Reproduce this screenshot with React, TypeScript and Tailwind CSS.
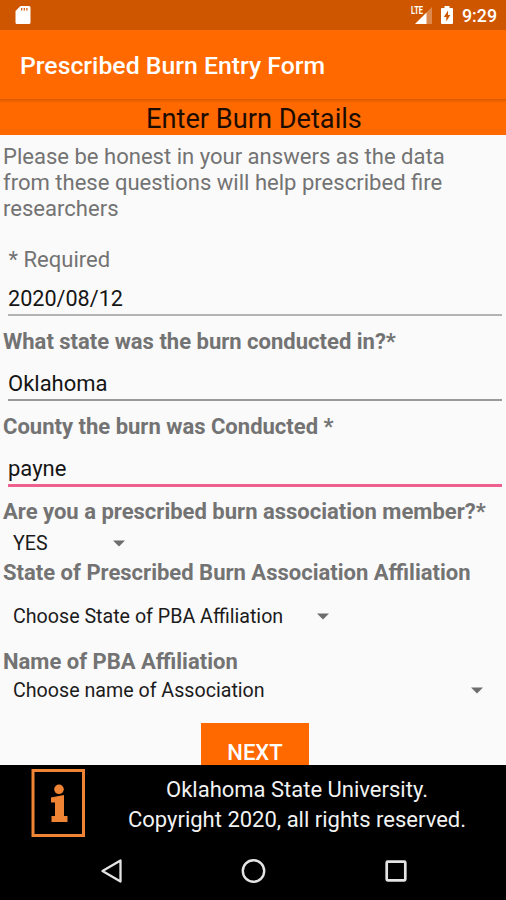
import type { ReactNode } from "react";

function StatusBar() {
  return (
    <div className="flex h-[30px] shrink-0 items-center bg-[#cf5600] pl-[15px] pr-[9px] text-white">
      <svg width="16" height="20" viewBox="0 0 16 20" aria-hidden="true">
        <path
          d="M5.5 1H14a1.5 1.5 0 0 1 1.5 1.5v15A1.5 1.5 0 0 1 14 19H2a1.5 1.5 0 0 1-1.500-1.500V6z"
          fill="currentColor"
        />
        <path d="M6.700 3v2.600M9.300 3v2.600M11.900 3v2.600" stroke="#cf5600" strokeWidth="1.200" />
      </svg>
      <div className="ml-auto flex items-center">
        <div className="relative h-[20px] w-[23px]">
          <span className="absolute left-[2px] top-0 origin-left scale-x-[0.75] text-[10px] font-bold leading-[11px]">LTE</span>
          <svg className="absolute inset-0" width="23" height="20" viewBox="0 0 23 20" aria-hidden="true">
            <path d="M23 2v17H6.500l5.500-5.500h5V8z" fill="white" fillOpacity="0.3" />
            <path d="M17.500 7.500V19H6z" fill="currentColor" />
          </svg>
        </div>
        <svg className="ml-[8px]" width="14" height="20" viewBox="0 0 14 20" aria-hidden="true">
          <path
            d="M4.500 1h5v2H12a1 1 0 0 1 1 1v14a1 1 0 0 1-1 1H2a1 1 0 0 1-1-1V4a1 1 0 0 1 1-1h2.500z"
            fill="currentColor"
          />
          <path d="M8 5.500 3.800 12h2.500v4.500L10.300 10H8z" fill="#cf5600" />
        </svg>
        <span className="ml-[8px] pt-px text-[17.800px] font-medium leading-[29px]">9:29</span>
      </div>
    </div>
  );
}

function Label({ children }: { children: ReactNode }) {
  return (
    <div className="h-[26px] whitespace-nowrap pl-[3px] text-[22.020px] font-bold leading-[26px] text-[#737373]">
      {children}
    </div>
  );
}

function Caret() {
  return (
    <svg className="shrink-0" width="12" height="7" viewBox="0 0 12 7" aria-hidden="true">
      <path d="M0 0.500h12L6 6.500z" fill="#6d6d6d" />
    </svg>
  );
}

function Spinner({ value, className }: { value: string; className: string }) {
  return (
    <button type="button" className={`flex h-[26px] items-center justify-between pl-[13px] ${className}`}>
      <span className="whitespace-nowrap pt-[2px] text-[19.650px] leading-[26px] text-[#1c1c1c]">{value}</span>
      <Caret />
    </button>
  );
}

function InfoIcon() {
  return (
    <svg className="ml-[31px] mt-[4px] shrink-0" width="54" height="68" viewBox="0 0 54 68" aria-hidden="true">
      <rect x="2" y="1.500" width="50.500" height="65" fill="none" stroke="#ee8434" strokeWidth="3" />
      <circle cx="28" cy="20.300" r="4.800" fill="#ee8434" />
      <path d="M20 28.500 33 26v21h3.500v6H20.500v-6H24V33.500h-4z" fill="#ee8434" />
    </svg>
  );
}

function NavBar() {
  return (
    <div className="flex h-[58px] items-center justify-between pl-[100px] pr-[99px] text-[#e4e4e4]">
      <svg width="23" height="26" viewBox="0 0 23 26" fill="none" stroke="currentColor" strokeWidth="2.300" strokeLinejoin="round">
        <path d="M20.500 2.500v21L2.500 13z" />
      </svg>
      <svg width="26" height="26" viewBox="0 0 26 26" fill="none" stroke="currentColor" strokeWidth="2.400">
        <circle cx="12.500" cy="13" r="10.700" />
      </svg>
      <svg width="22" height="26" viewBox="0 0 22 26" fill="none" stroke="currentColor" strokeWidth="2.700">
        <rect x="1.700" y="3.700" width="18.600" height="18.600" rx="1" />
      </svg>
    </div>
  );
}

export default function App() {
  return (
    <div className="flex h-[900px] w-[506px] flex-col overflow-hidden bg-[#fafafa] font-['Roboto',sans-serif]">
      <StatusBar />
      <header className="flex h-[69px] shrink-0 items-center bg-[#ff6900] pl-[20px] pt-[3px]">
        <h1 className="whitespace-nowrap text-[24.800px] font-medium leading-[30px] text-white">Prescribed Burn Entry Form</h1>
      </header>

      <main className="flex min-h-0 flex-1 flex-col overflow-hidden">
        <h2 className="h-[36px] shrink-0 bg-[#ff6900] bg-linear-to-b from-[#d95a00] from-0% to-[#ff6900] to-[4px] pl-[2px] pt-[4px] text-center text-[27.200px] leading-[32px] text-[#1c0c00]">
          Enter Burn Details
        </h2>
        <p className="mt-[9px] pl-[3px] text-[22.050px] leading-[25.800px] text-[#737373]">
          Please be honest in your answers as the data
          <br />
          from these questions will help prescribed fire
          <br />
          researchers
        </p>
        <p className="mt-[26px] h-[25px] pl-[8.500px] text-[22.050px] leading-[25px] text-[#737373]">* Required</p>

        <div className="ml-[8px] mr-[4px] mt-[12px] h-[32px] shrink-0 border-b-2 border-[#b3b3b3] text-[21.600px] leading-[30px] text-[#151515]">
          2020/08/12
        </div>
        <div className="mt-[13px]">
          <Label>What state was the burn conducted in?*</Label>
        </div>
        <div className="ml-[8px] mr-[4px] mt-[14px] h-[32px] shrink-0 border-b-2 border-[#999999] text-[22px] leading-[30px] text-[#151515]">
          Oklahoma
        </div>
        <div className="mt-[13px]">
          <Label>County the burn was Conducted *</Label>
        </div>
        <div className="ml-[8px] mr-[4px] mt-[14px] h-[33px] shrink-0 border-b-3 border-[#f0608f] text-[22px] leading-[30px] text-[#151515]">
          payne
        </div>
        <div className="mt-[12px]">
          <Label>Are you a prescribed burn association member?*</Label>
        </div>
        <Spinner value="YES" className="mt-[5px] w-[125px]" />
        <div className="mt-[4px]">
          <Label>State of Prescribed Burn Association Affiliation</Label>
        </div>
        <Spinner value="Choose State of PBA Affiliation" className="mt-[17px] w-[329px]" />
        <div className="mt-[20px]">
          <Label>Name of PBA Affiliation</Label>
        </div>
        <Spinner value="Choose name of Association" className="mt-[2px] w-[483px]" />
        <button
          type="button"
          className="ml-[201px] mt-[20px] h-[42px] w-[108px] shrink-0 bg-[#ff6900] pt-[18px] text-[22px] font-medium leading-[24px] text-white"
        >
          NEXT
        </button>
      </main>

      <footer className="h-[135px] shrink-0 bg-black">
        <div className="flex h-[77px]">
          <InfoIcon />
          <p className="ml-[3px] mt-[10px] flex-1 text-center text-[22px] leading-[29.600px] text-[#f2f2f2]">
            Oklahoma State University.
            <br />
            Copyright 2020, all rights reserved.
          </p>
        </div>
        <NavBar />
      </footer>
    </div>
  );
}
